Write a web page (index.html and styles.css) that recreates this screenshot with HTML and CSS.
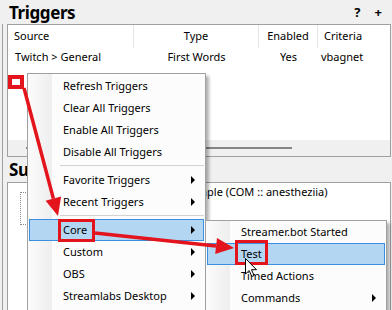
FILE: index.html
```html
<!DOCTYPE html>
<html lang="en">
<head>
  <meta charset="UTF-8" />
  <title>Triggers</title>
  <link rel="stylesheet" href="styles.css">
</head>
<body>
<div class="screen">
  <div class="title-bar">
    <h1 class="pane-title">Triggers</h1>
    <div class="tools"><span>?</span><span>+</span></div>
  </div>

  <div class="frame">
    <div class="list">
      <div class="list-head">
        <div class="cell c-source">Source</div>
        <div class="cell c-center">Type</div>
        <div class="cell c-center">Enabled</div>
        <div class="cell c-criteria">Criteria</div>
      </div>
      <div class="list-row">
        <div class="cell c-source">Twitch &gt; General</div>
        <div class="cell c-center">First Words</div>
        <div class="cell c-center">Yes</div>
        <div class="cell c-criteria">vbagnet</div>
      </div>
      <div class="list-fill"></div>
      <div class="hscroll"><div class="thumb"></div></div>
    </div>

    <h2 class="pane-title sub-title">Sub-Actions</h2>

    <div class="tree">
      <div class="branch"></div>
      <div class="tree-label">Twitch Send Message Example (COM :: anestheziia)</div>
    </div>
  </div>

  <!-- context menu -->
  <div class="menu main-menu">
    <div class="menu-item">Refresh Triggers</div>
    <div class="menu-item">Clear All Triggers</div>
    <div class="menu-item">Enable All Triggers</div>
    <div class="menu-item">Disable All Triggers</div>
    <div class="menu-sep"></div>
    <div class="menu-item has-sub">Favorite Triggers</div>
    <div class="menu-item has-sub">Recent Triggers</div>
    <div class="menu-sep"></div>
    <div class="menu-item has-sub hover">Core</div>
    <div class="menu-item has-sub">Custom</div>
    <div class="menu-item has-sub">OBS</div>
    <div class="menu-item has-sub">Streamlabs Desktop</div>
  </div>

  <div class="menu sub-menu">
    <div class="menu-item">Streamer.bot Started</div>
    <div class="menu-item hover">Test</div>
    <div class="menu-item">Timed Actions</div>
    <div class="menu-item has-sub">Commands</div>
  </div>

  <!-- annotations -->
  <div class="mark mark-box"></div>
  <div class="mark mark-core"></div>
  <div class="mark mark-test"></div>

  <svg class="arrows" width="392" height="310" viewBox="0 0 392 310">
    <line x1="24" y1="88" x2="53.4" y2="198.6" />
    <polygon points="58,216 45.6,200.7 61.1,196.5" />
    <line x1="95" y1="233" x2="216" y2="246" />
    <polygon points="234,248 215.2,254 217,238.1" />
  </svg>

  <svg class="cursor" width="13" height="20" viewBox="0 0 13 20">
    <path d="M0.5 0.5 L0.5 16 L4.2 12.5 L6.8 18.5 L9 17.5 L6.5 11.7 L11.5 11.7 Z" />
  </svg>
</div>
</body>
</html>
```

FILE: styles.css
```css
* {
  margin: 0;
  padding: 0;
  box-sizing: border-box;
}

html, body {
  width: 392px;
  height: 310px;
  overflow: hidden;
}

body {
  background: #f0f0f0;
  font-family: "Noto Sans", sans-serif;
  font-size: 11px;
  color: #000;
}

.screen {
  position: relative;
  width: 392px;
  height: 310px;
  overflow: hidden;
}

.title-bar {
  height: 24px;
  display: flex;
  align-items: center;
  justify-content: space-between;
  padding: 0 10px 0 9px;
}

.pane-title {
  font-size: 17px;
  font-weight: bold;
  letter-spacing: -0.4px;
  line-height: 23px;
}

.tools {
  display: flex;
  gap: 14px;
  font-size: 13px;
  font-weight: bold;
}

.frame {
  margin-left: 2px;
  border-left: 1px solid #a0a0a0;
  padding-left: 4px;
  height: 286px;
  display: flex;
  flex-direction: column;
}

.list {
  width: 384px;
  height: 133px;
  border: 1px solid #a0a0a0;
  background: #fff;
  display: flex;
  flex-direction: column;
}

.list-head,
.list-row {
  display: grid;
  grid-template-columns: 126px 125px 59px 1fr;
}

.list-head {
  height: 23px;
  line-height: 22px;
}

.list-head .cell {
  border-right: 1px solid #e5e5e5;
}

.list-head .cell:last-child {
  border-right: none;
}

.list-row {
  height: 18px;
  line-height: 17px;
}

.cell {
  white-space: nowrap;
  overflow: hidden;
}

.c-center {
  text-align: center;
}

.list-head .c-source { padding-left: 6px; }
.list-row .c-source { padding-left: 7px; }
.list-head .c-criteria { padding-left: 6px; }
.list-row .c-criteria { padding-left: 3px; }

.list-fill {
  flex: 1;
}

.hscroll {
  height: 16px;
  background: #f0f0f0;
  padding: 7px 0 0 18px;
}

.thumb {
  width: 266px;
  height: 2px;
  background: #868686;
}

.sub-title {
  height: 25px;
  line-height: 25px;
  padding-left: 2px;
}

.tree {
  width: 384px;
  flex: 1;
  border: 1px solid #a0a0a0;
  border-bottom: none;
  background: #fff;
  padding: 9px 0 0 12px;
  display: flex;
  align-items: flex-start;
}

.branch {
  width: 8px;
  height: 33px;
  border: 1px dotted #8c8c8c;
  border-right: none;
}

.tree-label {
  line-height: 16px;
  margin-top: -8px;
  margin-left: 37px;
  white-space: nowrap;
}

/* menus */
.menu {
  position: absolute;
  border: 1px solid #a0a0a0;
  background: linear-gradient(to right, #fbfbfb 0, #eeeeee 24px, #fcfcfc 24px);
  box-shadow: 3px 3px 3px rgba(0, 0, 0, 0.3);
  padding: 1px;
}

.main-menu {
  left: 27px;
  top: 73px;
  width: 179px;
  height: 260px;
}

.sub-menu {
  left: 205px;
  top: 220px;
  width: 182px;
  height: 120px;
  padding-top: 0;
}

.menu-item {
  height: 22px;
  display: flex;
  align-items: center;
  padding: 0 8px 1px 33px;
  border: 1px solid transparent;
  white-space: nowrap;
}

.menu-item.has-sub::after {
  content: "";
  margin-left: auto;
  border-left: 4px solid #000;
  border-top: 4px solid transparent;
  border-bottom: 4px solid transparent;
}

.menu-item.hover {
  background: #b3d7f3;
  border-color: #3b8fe0;
}

.menu-sep {
  height: 6px;
  margin-left: 31px;
  padding-top: 2px;
}

.menu-sep::before {
  content: "";
  display: block;
  height: 1px;
  background: #d2d2d2;
}

/* red annotations */
.mark {
  position: absolute;
  border: 3px solid #e3141c;
}

.mark-box {
  left: 8px;
  top: 75px;
  width: 16px;
  height: 14px;
  border-width: 4px;
  background: #fff;
}

.mark-core {
  left: 58px;
  top: 219px;
  width: 37px;
  height: 23px;
}

.mark-test {
  left: 235px;
  top: 240px;
  width: 33px;
  height: 25px;
}

.arrows {
  position: absolute;
  left: 0;
  top: 0;
}

.arrows line {
  stroke: #e3141c;
  stroke-width: 3.5;
}

.arrows polygon {
  fill: #e3141c;
}

.cursor {
  position: absolute;
  left: 245px;
  top: 258px;
}

.cursor path {
  fill: #fff;
  stroke: #000;
  stroke-width: 1;
}
```
